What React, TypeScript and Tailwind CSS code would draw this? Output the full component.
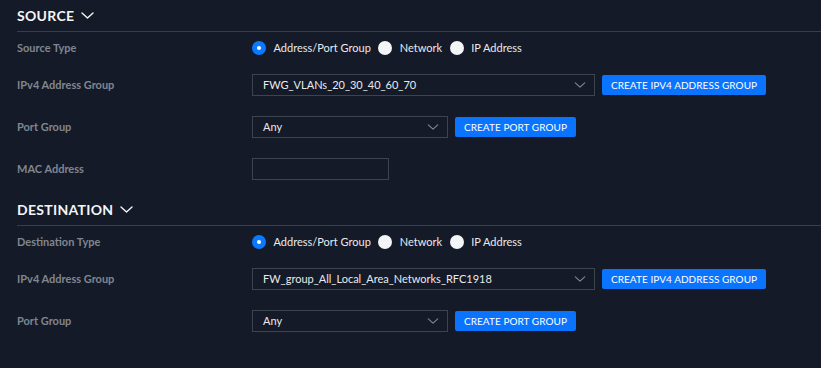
import React from 'react';

const Chevron = ({ className }: { className?: string }) => (
  <svg viewBox="0 0 13 7" className={className} fill="none">
    <path d="M1 1l5.5 5L12 1" stroke="currentColor" strokeWidth="1.4" strokeLinecap="round" strokeLinejoin="round" />
  </svg>
);

const Radio = ({ checked, label }: { checked?: boolean; label: string }) => (
  <div className="flex items-center">
    {checked ? (
      <span className="flex h-[14px] w-[14px] items-center justify-center rounded-full bg-[#0a79ff]">
        <span className="h-[4px] w-[4px] rounded-full bg-white" />
      </span>
    ) : (
      <span className="h-[14px] w-[14px] rounded-full bg-[#f4f5f6]" />
    )}
    <span className="ml-[7.5px] mr-[7.5px] text-[11px] text-[#e8eaed]">{label}</span>
  </div>
);

const Select = ({ value, width }: { value: string; width: string }) => (
  <div className={`flex h-[22px] items-center justify-between border border-[#3c444e] pl-[10px] pr-[8px] ${width}`}>
    <span className="text-[11px] text-[#e8eaed]">{value}</span>
    <Chevron className="h-[6px] w-[12px] text-[#7e858f]" />
  </div>
);

const Button = ({ children }: { children: React.ReactNode }) => (
  <button className="ml-[7px] flex h-[20px] items-center rounded-[2px] bg-[#0a74ff] px-[9px] text-[10px] uppercase tracking-[0.05px] text-white">
    {children}
  </button>
);

const Row = ({ label, className, children }: { label: string; className?: string; children: React.ReactNode }) => (
  <div className={`flex h-[22px] items-center ${className ?? ''}`}>
    <div className="w-[235px] text-[11px] font-bold text-[#80868f]">{label}</div>
    <div className="flex items-center">{children}</div>
  </div>
);

const Section = ({ title, typeLabel, group, extra, className }: {
  title: string;
  typeLabel: string;
  group: string;
  extra?: boolean;
  className?: string;
}) => (
  <div className={`pl-[17px] ${className ?? ''}`}>
    <div className="flex h-[30px] items-center">
      <span className="text-[14px] font-bold tracking-[0.3px] text-[#f4f5f6]">{title}</span>
      <Chevron className="ml-[7px] h-[7px] w-[13px] text-[#f4f5f6]" />
    </div>
    <div className="mt-px h-px bg-[#383f4b]" />
    <Row label={typeLabel} className="mt-[5px]">
      <Radio checked label="Address/Port Group" />
      <Radio label="Network" />
      <Radio label="IP Address" />
    </Row>
    <Row label="IPv4 Address Group" className="mt-[15px]">
      <Select value={group} width="w-[343px]" />
      <Button>Create IPv4 Address Group</Button>
    </Row>
    <Row label="Port Group" className="mt-[20px]">
      <Select value="Any" width="w-[196px]" />
      <Button>Create Port Group</Button>
    </Row>
    {extra && (
      <Row label="MAC Address" className="mt-[20px]">
        <div className="h-[22px] w-[137px] border border-[#3c444e]" />
      </Row>
    )}
  </div>
);

export default function App() {
  return (
    <div className="h-[368px] w-full bg-[#141a27] font-['Lato','Liberation_Sans',sans-serif]">
      <Section title="SOURCE" typeLabel="Source Type" group="FWG_VLANs_20_30_40_60_70" extra />
      <Section
        title="DESTINATION"
        typeLabel="Destination Type"
        group="FW_group_All_Local_Area_Networks_RFC1918"
        className="mt-[14px]"
      />
    </div>
  );
}
